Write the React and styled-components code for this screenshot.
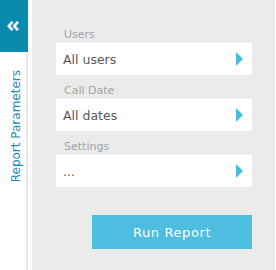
import React from 'react'
import styled, { createGlobalStyle } from 'styled-components'

const GlobalStyle = createGlobalStyle`
  html, body {
    margin: 0;
    padding: 0;
    background: #ffffff;
  }
  body {
    font-family: "DejaVu Sans", Verdana, sans-serif;
  }
`

const fields = [
  { label: 'Users', value: 'All users' },
  { label: 'Call Date', value: 'All dates' },
  { label: 'Settings', value: '...' },
]

const Arrow = () => (
  <svg width="7" height="14" viewBox="0 0 7 14">
    <polygon points="0,0 7,7 0,14" fill="#4ab9e2" />
  </svg>
)

const Collapse = () => (
  <svg width="12" height="10" viewBox="0 0 12 10">
    <polyline points="5.5,0.8 1.8,5 5.5,9.2" fill="none" stroke="#fff" strokeWidth="2.6" />
    <polyline points="11,0.8 7.3,5 11,9.2" fill="none" stroke="#fff" strokeWidth="2.6" />
  </svg>
)

const App = () => {
  return (
    <Page>
      <GlobalStyle />
      <Sidebar>
        <Toggle>
          <Collapse />
        </Toggle>
        <SideTitle>Report Parameters</SideTitle>
      </Sidebar>
      <Panel>
        {fields.map((f) => (
          <Field key={f.label}>
            <Label>{f.label}</Label>
            <Select>
              <span>{f.value}</span>
              <Arrow />
            </Select>
          </Field>
        ))}
        <Actions>
          <RunButton>Run Report</RunButton>
        </Actions>
      </Panel>
    </Page>
  )
}

const Page = styled.div`
  display: flex;
  height: 270px;
  width: 276px;
  overflow: hidden;
`

const Sidebar = styled.div`
  width: 28px;
  flex-shrink: 0;
  display: flex;
  flex-direction: column;
  background: linear-gradient(to right, #ffffff 26px, #e8e8e8 26px);
`

const Toggle = styled.div`
  height: 52px;
  background: #0b8ab0;
  display: flex;
  align-items: center;
  justify-content: center;
  padding-right: 2px;
`

const SideTitle = styled.div`
  writing-mode: vertical-rl;
  transform: rotate(180deg);
  font-size: 12px;
  line-height: 14px;
  color: #1a8db4;
  width: 26px;
  display: flex;
  align-items: center;
  margin-top: 18px;
  padding: 0 6px 0 0;
  box-sizing: border-box;
`

const Panel = styled.div`
  flex: 1;
  margin-left: 4px;
  margin-right: 1px;
  background: #ebebeb;
  padding: 28px 23px 0 24px;
  display: flex;
  flex-direction: column;
`

const Field = styled.div`
  display: flex;
  flex-direction: column;
  margin-bottom: 9px;
`

const Label = styled.div`
  font-size: 11px;
  line-height: 13px;
  color: #a3a3a3;
  padding-left: 8px;
  margin-bottom: 2px;
`

const Select = styled.div`
  height: 32px;
  background: #ffffff;
  display: flex;
  align-items: center;
  justify-content: space-between;
  padding: 0 9px 0 7px;
  font-size: 12.5px;
  color: #585858;
`

const Actions = styled.div`
  display: flex;
  justify-content: flex-end;
  margin-top: 19px;
`

const RunButton = styled.button`
  width: 160px;
  height: 34px;
  border: none;
  background: #4dbee0;
  color: #ffffff;
  font-family: "DejaVu Sans", Verdana, sans-serif;
  font-size: 13px;
  letter-spacing: 0.6px;
  padding: 0;
`

export default App
